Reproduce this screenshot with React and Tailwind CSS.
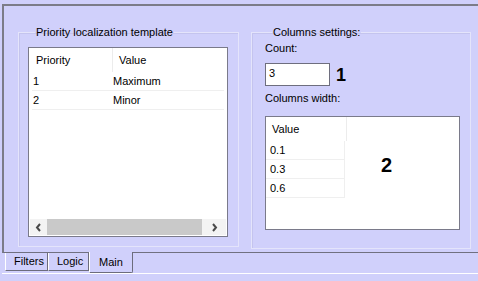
import React from 'react';

const priorities = [
  { priority: '1', value: 'Maximum' },
  { priority: '2', value: 'Minor' },
];

const widths = ['0.1', '0.3', '0.6'];

const Chevron = ({ dir }) => (
  <svg width="7" height="9" viewBox="0 0 7 9">
    <path
      d={dir === 'left' ? 'M5 1 L2 4.5 L5 8' : 'M2 1 L5 4.5 L2 8'}
      fill="none"
      stroke="#4a4a4a"
      strokeWidth="2"
    />
  </svg>
);

const GroupBox = ({ title, className, children }) => (
  <fieldset className={`border border-[#e4e4fb] shadow-[inset_1px_1px_0_#c4c4ee] ${className}`}>
    <legend className="ml-[7px] px-[1px] leading-[13px]">{title}</legend>
    {children}
  </fieldset>
);

const App = () => {
  return (
    <div
      className="w-[478px] h-[281px] overflow-hidden bg-[#d0d0fb] text-[11px] text-black"
      style={{ fontFamily: '"Liberation Sans", Arial, sans-serif' }}
    >
      <div className="pt-[4px] pl-[2px]">
        <div className="h-[249px] border-t-2 border-l-2 border-[#7c7c88] border-b border-b-[#707080] flex items-start">
          <GroupBox title="Priority localization template" className="ml-[14px] mt-[20px] w-[221px] h-[221px] pl-[9px]">
            <div className="mt-[8px] w-[200px] h-[190px] border border-[#7a7a8a] bg-white flex flex-col">
              <div className="flex h-[24px] items-center">
                <div className="w-[84px] h-full pl-[7px] flex items-center border-r border-[#ececec]">Priority</div>
                <div className="pl-[6px]">Value</div>
              </div>
              {priorities.map((row) => (
                <div key={row.priority} className="flex h-[19px] items-center mx-[3px] border-b border-[#efefef]">
                  <div className="w-[81px] pl-[1px]">{row.priority}</div>
                  <div>{row.value}</div>
                </div>
              ))}
              <div className="flex-1" />
              <div className="flex h-[16px] mb-[1px] mx-[1px] bg-[#f3f3f3]">
                <div className="w-[17px] flex items-center justify-center">
                  <Chevron dir="left" />
                </div>
                <div className="flex-1 bg-[#c9c9c9]" />
                <div className="w-[24px] flex items-center justify-center">
                  <Chevron dir="right" />
                </div>
              </div>
            </div>
          </GroupBox>

          <GroupBox title="Columns settings:" className="ml-[12px] mt-[20px] w-[220px] h-[223px] pl-[13px]">
            <div className="mt-[3px] leading-[13px]">Count:</div>
            <div className="mt-[8px] flex items-center">
              <div className="w-[65px] h-[23px] border border-[#6e6e7e] bg-white pl-[3px] pt-[3px] leading-[13px]">3</div>
              <div className="ml-[6px] text-[18px] font-bold leading-none">1</div>
            </div>
            <div className="mt-[6px] leading-[13px]">Columns width:</div>
            <div className="relative mt-[11px] w-[195px] h-[114px] border border-[#7a7a8a] bg-white">
              <div className="flex h-[24px]">
                <div className="w-[81px] h-full pl-[6px] flex items-center border-r border-[#ececec]">Value</div>
              </div>
              {widths.map((w) => (
                <div key={w} className="w-[79px] h-[19px] pl-[4px] flex items-center border-b border-r border-[#efefef]">
                  {w}
                </div>
              ))}
              <div className="absolute left-[115px] top-[38px] text-[20px] font-bold leading-none">2</div>
            </div>
          </GroupBox>
        </div>

        <div className="flex h-[22px] -mt-px pl-[3px] border-b border-white">
          <div className="w-[43px] h-[18px] mt-[1px] border-l border-l-white border-r border-b border-[#6c6c7c] flex items-center pl-[8px]">
            Filters
          </div>
          <div className="w-[41px] h-[18px] mt-[1px] border-l border-l-white border-r border-b border-[#6c6c7c] flex items-center pl-[8px]">
            Logic
          </div>
          <div className="w-[44px] h-[21px] bg-[#d0d0fb] border-l border-l-white border-r border-b border-[#6c6c7c] rounded-br-[2px] flex items-center pl-[9px]">
            Main
          </div>
        </div>
      </div>
    </div>
  );
};

export default App;
